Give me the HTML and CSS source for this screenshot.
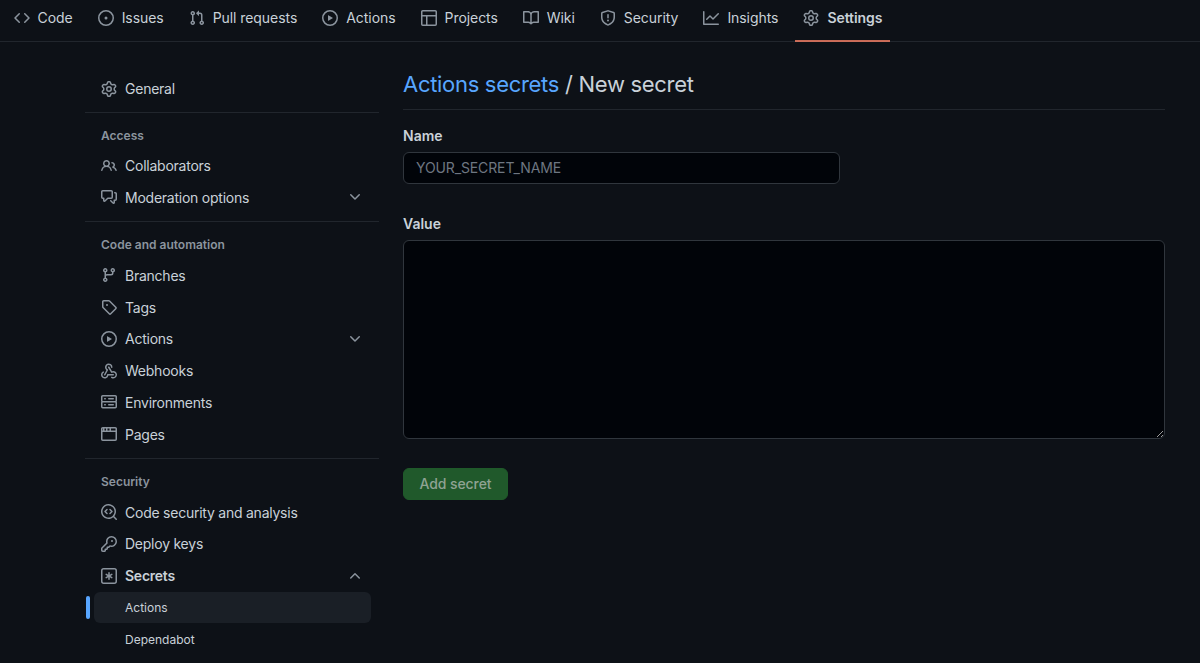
FILE: index.html
```html
<!DOCTYPE html>
<html lang="en">

<head>
    <meta charset="UTF-8">
    <meta name="viewport" content="width=device-width, initial-scale=1.0">
    <title>Actions secrets / New secret</title>
    <link rel="stylesheet" href="styles.css">
</head>

<body>
<svg class="icon-defs" aria-hidden="true">
    <symbol id="i-code" viewBox="0 0 16 16"><path d="m11.28 3.22 4.25 4.25a.75.75 0 0 1 0 1.06l-4.25 4.25a.749.749 0 0 1-1.275-.326.749.749 0 0 1 .215-.734L13.94 8l-3.72-3.72a.749.749 0 0 1 .326-1.275.749.749 0 0 1 .734.215Zm-6.56 0a.751.751 0 0 1 1.042.018.751.751 0 0 1 .018 1.042L2.06 8l3.72 3.72a.749.749 0 0 1-.326 1.275.749.749 0 0 1-.734-.215L.47 8.53a.75.75 0 0 1 0-1.06Z"/></symbol>
    <symbol id="i-issue" viewBox="0 0 16 16"><path d="M8 9.5a1.5 1.5 0 1 0 0-3 1.5 1.5 0 0 0 0 3Z"/><path d="M8 0a8 8 0 1 1 0 16A8 8 0 0 1 8 0ZM1.5 8a6.5 6.5 0 1 0 13 0 6.5 6.5 0 0 0-13 0Z"/></symbol>
    <symbol id="i-pull" viewBox="0 0 16 16"><path d="M1.5 3.25a2.25 2.25 0 1 1 3 2.122v5.256a2.251 2.251 0 1 1-1.5 0V5.372A2.25 2.25 0 0 1 1.5 3.25Zm5.677-.177L9.573.677A.25.25 0 0 1 10 .854V2.5h1A2.5 2.5 0 0 1 13.5 5v5.628a2.251 2.251 0 1 1-1.5 0V5a1 1 0 0 0-1-1h-1v1.646a.25.25 0 0 1-.427.177L7.177 3.427a.25.25 0 0 1 0-.354ZM3.75 2.5a.75.75 0 1 0 0 1.5.75.75 0 0 0 0-1.5Zm0 9.5a.75.75 0 1 0 0 1.5.75.75 0 0 0 0-1.5Zm8.25.75a.75.75 0 1 0 1.5 0 .75.75 0 0 0-1.5 0Z"/></symbol>
    <symbol id="i-play" viewBox="0 0 16 16"><path d="M8 0a8 8 0 1 1 0 16A8 8 0 0 1 8 0ZM1.5 8a6.5 6.5 0 1 0 13 0 6.5 6.5 0 0 0-13 0Zm4.879-2.773 4.264 2.559a.25.25 0 0 1 0 .428l-4.264 2.559A.25.25 0 0 1 6 10.559V5.442a.25.25 0 0 1 .379-.215Z"/></symbol>
    <symbol id="i-table" viewBox="0 0 16 16"><path d="M0 1.75C0 .784.784 0 1.75 0h12.5C15.216 0 16 .784 16 1.75v12.5A1.75 1.75 0 0 1 14.25 16H1.75A1.75 1.75 0 0 1 0 14.25ZM6.5 6.5v8h7.75a.25.25 0 0 0 .25-.25V6.5Zm8-1.5V1.75a.25.25 0 0 0-.25-.25H1.75a.25.25 0 0 0-.25.25V5Zm-13 1.5v7.75c0 .138.112.25.25.25H5v-8Z"/></symbol>
    <symbol id="i-book" viewBox="0 0 16 16"><path d="M0 1.75A.75.75 0 0 1 .75 1h4.253c1.227 0 2.317.59 3 1.501A3.743 3.743 0 0 1 11.006 1h4.245a.75.75 0 0 1 .75.75v10.5a.75.75 0 0 1-.75.75h-4.507a2.25 2.25 0 0 0-1.591.659l-.622.621a.75.75 0 0 1-1.06 0l-.622-.621A2.25 2.25 0 0 0 5.258 13H.75a.75.75 0 0 1-.75-.75Zm7.251 10.324.004-5.073-.002-2.253A2.25 2.25 0 0 0 5.003 2.5H1.5v9h3.757a3.75 3.75 0 0 1 1.994.574ZM8.755 4.75l-.004 7.322a3.752 3.752 0 0 1 1.992-.572H14.5v-9h-3.495a2.25 2.25 0 0 0-2.25 2.25Z"/></symbol>
    <symbol id="i-shield" viewBox="0 0 16 16"><path d="M7.467.133a1.748 1.748 0 0 1 1.066 0l5.25 1.68A1.75 1.75 0 0 1 15 3.48V7c0 1.566-.32 3.182-1.303 4.682-.983 1.498-2.585 2.813-5.032 3.855a1.697 1.697 0 0 1-1.33 0c-2.447-1.042-4.049-2.357-5.032-3.855C1.32 10.182 1 8.566 1 7V3.48a1.75 1.75 0 0 1 1.217-1.667Zm.61 1.429a.25.25 0 0 0-.153 0l-5.25 1.68a.25.25 0 0 0-.174.238V7c0 1.358.275 2.666 1.057 3.86.784 1.194 2.121 2.34 4.366 3.297a.196.196 0 0 0 .154 0c2.245-.956 3.582-2.104 4.366-3.298C13.225 9.666 13.5 8.36 13.5 7V3.48a.251.251 0 0 0-.174-.237l-5.25-1.68ZM8.75 4.75v3a.75.75 0 0 1-1.5 0v-3a.75.75 0 0 1 1.5 0ZM9 10.5a1 1 0 1 1-2 0 1 1 0 0 1 2 0Z"/></symbol>
    <symbol id="i-graph" viewBox="0 0 16 16"><path d="M1.5 1.75V13.5h13.75a.75.75 0 0 1 0 1.5H.75a.75.75 0 0 1-.75-.75V1.75a.75.75 0 0 1 1.5 0Zm14.28 2.53-5.25 5.25a.75.75 0 0 1-1.06 0L7 7.06 4.28 9.78a.751.751 0 0 1-1.042-.018.751.751 0 0 1-.018-1.042l3.25-3.25a.75.75 0 0 1 1.06 0L10 7.94l4.72-4.72a.751.751 0 0 1 1.042.018.751.751 0 0 1 .018 1.042Z"/></symbol>
    <symbol id="i-gear" viewBox="0 0 16 16"><path d="M8 0a8.2 8.2 0 0 1 .701.031C9.444.095 9.99.645 10.16 1.29l.288 1.107c.018.066.079.158.212.224.231.114.454.243.668.386.123.082.233.09.299.071l1.103-.303c.644-.176 1.392.021 1.82.63.27.385.506.792.704 1.218.315.675.111 1.422-.364 1.891l-.814.806c-.049.048-.098.147-.088.294.016.257.016.515 0 .772-.01.147.038.246.088.294l.814.806c.475.469.679 1.216.364 1.891a7.977 7.977 0 0 1-.704 1.217c-.428.61-1.176.807-1.82.63l-1.102-.302c-.067-.019-.177-.011-.3.071a5.909 5.909 0 0 1-.668.386c-.133.066-.194.158-.211.224l-.29 1.106c-.168.646-.715 1.196-1.458 1.26a8.006 8.006 0 0 1-1.402 0c-.743-.064-1.289-.614-1.458-1.26l-.289-1.106c-.018-.066-.079-.158-.212-.224a5.738 5.738 0 0 1-.668-.386c-.123-.082-.233-.09-.299-.071l-1.103.303c-.644.176-1.392-.021-1.82-.63a8.12 8.12 0 0 1-.704-1.218c-.315-.675-.111-1.422.363-1.891l.815-.806c.05-.048.098-.147.088-.294a6.214 6.214 0 0 1 0-.772c.01-.147-.038-.246-.088-.294l-.815-.806C.635 6.045.431 5.298.746 4.623a7.92 7.92 0 0 1 .704-1.217c.428-.61 1.176-.807 1.82-.63l1.102.302c.067.019.177.011.3-.071.214-.143.437-.272.668-.386.133-.066.194-.158.211-.224l.29-1.106C6.009.645 6.556.095 7.299.03 7.53.01 7.764 0 8 0Zm-.571 1.525c-.036.003-.108.036-.137.146l-.289 1.105c-.147.561-.549.967-.998 1.189-.173.086-.34.183-.5.29-.417.278-.97.423-1.529.27l-1.103-.303c-.109-.03-.175.016-.195.045-.22.312-.412.644-.573.99-.014.031-.021.11.059.19l.815.806c.411.406.562.957.53 1.456a4.709 4.709 0 0 0 0 .582c.032.499-.119 1.05-.53 1.456l-.815.806c-.081.08-.073.159-.059.19.162.346.353.677.573.989.02.03.085.076.195.046l1.102-.303c.56-.153 1.113-.008 1.53.27.161.107.328.204.501.29.447.222.85.629.997 1.189l.289 1.105c.029.109.101.143.137.146a6.6 6.6 0 0 0 1.142 0c.036-.003.108-.036.137-.146l.289-1.105c.147-.561.549-.967.998-1.189.173-.086.34-.183.5-.29.417-.278.97-.423 1.529-.27l1.103.303c.109.029.175-.016.195-.045.22-.313.411-.644.573-.99.014-.031.021-.11-.059-.19l-.815-.806c-.411-.406-.562-.957-.53-1.456a4.709 4.709 0 0 0 0-.582c-.032-.499.119-1.05.53-1.456l.815-.806c.081-.08.073-.159.059-.19a6.464 6.464 0 0 0-.573-.989c-.02-.03-.085-.076-.195-.046l-1.102.303c-.56.153-1.113.008-1.53-.27a4.44 4.44 0 0 0-.501-.29c-.447-.222-.85-.629-.997-1.189l-.289-1.105c-.029-.11-.101-.143-.137-.146a6.6 6.6 0 0 0-1.142 0ZM11 8a3 3 0 1 1-6 0 3 3 0 0 1 6 0ZM9.5 8a1.5 1.5 0 1 0-3.001.001A1.5 1.5 0 0 0 9.5 8Z"/></symbol>
    <symbol id="i-people" viewBox="0 0 16 16"><path d="M2 5.5a3.5 3.5 0 1 1 5.898 2.549 5.508 5.508 0 0 1 3.034 4.084.75.75 0 1 1-1.482.235 4 4 0 0 0-7.9 0 .75.75 0 0 1-1.482-.236A5.507 5.507 0 0 1 3.102 8.05 3.493 3.493 0 0 1 2 5.5ZM11 4a3.001 3.001 0 0 1 2.22 5.018 5.01 5.01 0 0 1 2.56 3.012.749.749 0 0 1-.885.954.752.752 0 0 1-.549-.514 3.507 3.507 0 0 0-2.522-2.372.75.75 0 0 1-.574-.73v-.352a.75.75 0 0 1 .416-.672A1.5 1.5 0 0 0 11 5.5.75.75 0 0 1 11 4Zm-5.5-.5a2 2 0 1 0-.001 3.999A2 2 0 0 0 5.5 3.5Z"/></symbol>
    <symbol id="i-comments" viewBox="0 0 16 16"><path d="M1.75 1h8.5c.966 0 1.75.784 1.75 1.75v5.5A1.75 1.75 0 0 1 10.25 10H7.061l-2.574 2.573A1.458 1.458 0 0 1 2 11.543V10h-.25A1.75 1.75 0 0 1 0 8.25v-5.5C0 1.784.784 1 1.75 1ZM1.5 2.75v5.5c0 .138.112.25.25.25h1a.75.75 0 0 1 .75.75v2.19l2.72-2.72a.749.749 0 0 1 .53-.22h3.5a.25.25 0 0 0 .25-.25v-5.5a.25.25 0 0 0-.25-.25h-8.5a.25.25 0 0 0-.25.25Zm13 2a.25.25 0 0 0-.25-.25h-.5a.75.75 0 0 1 0-1.5h.5c.966 0 1.75.784 1.75 1.75v5.5A1.75 1.75 0 0 1 14.25 12H14v1.543a1.458 1.458 0 0 1-2.487 1.03L9.22 12.28a.749.749 0 0 1 .326-1.275.749.749 0 0 1 .734.215l2.22 2.22v-2.19a.75.75 0 0 1 .75-.75h1a.25.25 0 0 0 .25-.25Z"/></symbol>
    <symbol id="i-branch" viewBox="0 0 16 16"><path d="M9.5 3.25a2.25 2.25 0 1 1 3 2.122V6A2.5 2.5 0 0 1 10 8.5H6a1 1 0 0 0-1 1v1.128a2.251 2.251 0 1 1-1.5 0V5.372a2.25 2.25 0 1 1 1.5 0v1.836A2.493 2.493 0 0 1 6 7h4a1 1 0 0 0 1-1v-.628A2.25 2.25 0 0 1 9.5 3.25Zm-6 0a.75.75 0 1 0 1.5 0 .75.75 0 0 0-1.5 0Zm8.25-.75a.75.75 0 1 0 0 1.5.75.75 0 0 0 0-1.5ZM4.25 12a.75.75 0 1 0 0 1.5.75.75 0 0 0 0-1.5Z"/></symbol>
    <symbol id="i-tag" viewBox="0 0 16 16"><path d="M1 7.775V2.75C1 1.784 1.784 1 2.75 1h5.025c.464 0 .91.184 1.238.513l6.25 6.25a1.75 1.75 0 0 1 0 2.474l-5.026 5.026a1.75 1.75 0 0 1-2.474 0l-6.25-6.25A1.752 1.752 0 0 1 1 7.775Zm1.5 0c0 .066.026.13.073.177l6.25 6.25a.25.25 0 0 0 .354 0l5.025-5.025a.25.25 0 0 0 0-.354l-6.25-6.25a.25.25 0 0 0-.177-.073H2.75a.25.25 0 0 0-.25.25ZM6 5a1 1 0 1 1 0 2 1 1 0 0 1 0-2Z"/></symbol>
    <symbol id="i-webhook" viewBox="0 0 16 16"><path d="M5.5 4.25a2.25 2.25 0 0 1 4.5 0 .75.75 0 0 0 1.5 0 3.75 3.75 0 1 0-6.14 2.889l-2.272 4.258a.75.75 0 0 0 1.324.706L7 7.25a.75.75 0 0 0-.309-1.015A2.25 2.25 0 0 1 5.5 4.25Z"/><path d="M7.364 3.607a.75.75 0 0 1 1.03.257l2.608 4.349a3.75 3.75 0 1 1-.628 6.785.75.75 0 0 1 .752-1.299 2.25 2.25 0 1 0-.033-3.88.75.75 0 0 1-1.03-.256L7.107 4.636a.75.75 0 0 1 .257-1.03Z"/><path d="M2.9 8.776A.75.75 0 0 1 2.625 9.8 2.25 2.25 0 1 0 6 11.75a.75.75 0 0 1 .75-.751h5.5a.75.75 0 0 1 0 1.5H7.425a3.751 3.751 0 1 1-5.55-3.998.75.75 0 0 1 1.024.274Z"/></symbol>
    <symbol id="i-server" viewBox="0 0 16 16"><path d="M1.75 1h12.5c.966 0 1.75.784 1.75 1.75v4c0 .372-.116.717-.314 1 .198.283.314.628.314 1v4a1.75 1.75 0 0 1-1.75 1.75H1.75A1.75 1.75 0 0 1 0 12.75v-4c0-.358.109-.707.314-1a1.739 1.739 0 0 1-.314-1v-4C0 1.784.784 1 1.75 1ZM1.5 2.75v4c0 .138.112.25.25.25h12.5a.25.25 0 0 0 .25-.25v-4a.25.25 0 0 0-.25-.25H1.75a.25.25 0 0 0-.25.25Zm.25 5.75a.25.25 0 0 0-.25.25v4c0 .138.112.25.25.25h12.5a.25.25 0 0 0 .25-.25v-4a.25.25 0 0 0-.25-.25ZM7 4.75A.75.75 0 0 1 7.75 4h4.5a.75.75 0 0 1 0 1.5h-4.5A.75.75 0 0 1 7 4.75ZM7.75 10h4.5a.75.75 0 0 1 0 1.5h-4.5a.75.75 0 0 1 0-1.5ZM3 4.75A.75.75 0 0 1 3.75 4h.5a.75.75 0 0 1 0 1.5h-.5A.75.75 0 0 1 3 4.75ZM3.75 10h.5a.75.75 0 0 1 0 1.5h-.5a.75.75 0 0 1 0-1.5Z"/></symbol>
    <symbol id="i-browser" viewBox="0 0 16 16"><path d="M0 2.75C0 1.784.784 1 1.75 1h12.5c.966 0 1.75.784 1.75 1.75v10.5A1.75 1.75 0 0 1 14.25 15H1.75A1.75 1.75 0 0 1 0 13.25ZM14.5 6h-13v7.25c0 .138.112.25.25.25h12.5a.25.25 0 0 0 .25-.25Zm0-3.25a.25.25 0 0 0-.25-.25H10v2h4.5ZM8.5 4.5v-2h-2v2Zm-3.5 0v-2H3.5v2ZM2 4.5v-2h-.25a.25.25 0 0 0-.25.25V4.5Z"/></symbol>
    <symbol id="i-codescan" viewBox="0 0 16 16"><path d="M8.47 4.97a.75.75 0 0 0 0 1.06L9.94 7.5 8.47 8.97a.75.75 0 1 0 1.06 1.06l2-2a.75.75 0 0 0 0-1.06l-2-2a.75.75 0 0 0-1.06 0ZM6.53 6.03a.75.75 0 0 0-1.06-1.06l-2 2a.75.75 0 0 0 0 1.06l2 2a.75.75 0 1 0 1.06-1.06L5.06 7.5l1.47-1.47Z"/><path d="M12.246 13.307a7.501 7.501 0 1 1 1.06-1.06l2.474 2.473a.749.749 0 0 1-.326 1.275.749.749 0 0 1-.734-.215ZM1.5 7.5a6.002 6.002 0 0 0 3.608 5.504 6.002 6.002 0 0 0 6.486-1.117.748.748 0 0 1 .292-.293A6 6 0 1 0 1.5 7.5Z"/></symbol>
    <symbol id="i-key" viewBox="0 0 16 16"><path d="M10.5 0a5.499 5.499 0 1 1-1.288 10.848l-.932.932a.749.749 0 0 1-.53.22H7v.75a.749.749 0 0 1-.22.53l-.5.5a.749.749 0 0 1-.53.22H5v.75a.749.749 0 0 1-.22.53l-.5.5a.749.749 0 0 1-.53.22h-2A1.75 1.75 0 0 1 0 14.25v-2c0-.199.079-.389.22-.53l4.932-4.932A5.5 5.5 0 0 1 10.5 0Zm-4 5.5c-.001.431.069.86.205 1.269a.75.75 0 0 1-.181.768L1.5 12.56v1.69c0 .138.112.25.25.25h1.69l.06-.06v-1.19a.75.75 0 0 1 .75-.75h1.19l.06-.06v-1.19a.75.75 0 0 1 .75-.75h1.19l1.023-1.025a.75.75 0 0 1 .768-.18A4 4 0 1 0 6.5 5.5ZM11 6a1 1 0 1 1 0-2 1 1 0 0 1 0 2Z"/></symbol>
    <symbol id="i-asterisk" viewBox="0 0 16 16"><path d="M0 2.75A2.75 2.75 0 0 1 2.75 0h10.5A2.75 2.75 0 0 1 16 2.75v10.5A2.75 2.75 0 0 1 13.25 16H2.75A2.75 2.75 0 0 1 0 13.25ZM2.75 1.5c-.69 0-1.25.56-1.25 1.25v10.5c0 .69.56 1.25 1.25 1.25h10.5c.69 0 1.25-.56 1.25-1.25V2.75c0-.69-.56-1.25-1.25-1.25Z"/><path d="M8 4a.75.75 0 0 1 .75.75V6.7l1.69-.975a.75.75 0 0 1 .75 1.3L9.5 8l1.69.976a.75.75 0 0 1-.75 1.298L8.75 9.3v1.951a.75.75 0 0 1-1.5 0V9.299l-1.69.976a.75.75 0 0 1-.75-1.3L6.5 8l-1.69-.975a.75.75 0 0 1 .75-1.3l1.69.976V4.75A.75.75 0 0 1 8 4Z"/></symbol>
    <symbol id="i-down" viewBox="0 0 16 16"><path d="M12.78 5.22a.749.749 0 0 1 0 1.06l-4.25 4.25a.749.749 0 0 1-1.06 0L3.22 6.28a.749.749 0 1 1 1.06-1.06L8 8.939l3.72-3.719a.749.749 0 0 1 1.06 0Z"/></symbol>
    <symbol id="i-up" viewBox="0 0 16 16"><path d="M3.22 10.53a.749.749 0 0 1 0-1.06l4.25-4.25a.749.749 0 0 1 1.06 0l4.25 4.25a.749.749 0 1 1-1.06 1.06L8 6.811 4.28 10.53a.749.749 0 0 1-1.06 0Z"/></symbol>
</svg>

<nav class="repo-nav">
    <a class="tab" href="#"><svg class="icon"><use href="#i-code"/></svg>Code</a>
    <a class="tab" href="#"><svg class="icon"><use href="#i-issue"/></svg>Issues</a>
    <a class="tab" href="#"><svg class="icon"><use href="#i-pull"/></svg>Pull requests</a>
    <a class="tab" href="#"><svg class="icon"><use href="#i-play"/></svg>Actions</a>
    <a class="tab" href="#"><svg class="icon"><use href="#i-table"/></svg>Projects</a>
    <a class="tab" href="#"><svg class="icon"><use href="#i-book"/></svg>Wiki</a>
    <a class="tab" href="#"><svg class="icon"><use href="#i-shield"/></svg>Security</a>
    <a class="tab" href="#"><svg class="icon"><use href="#i-graph"/></svg>Insights</a>
    <a class="tab tab-selected" href="#"><svg class="icon"><use href="#i-gear"/></svg>Settings</a>
</nav>

<div class="layout">
    <aside class="sidebar">
        <section class="side-group">
            <a class="side-item" href="#"><svg class="icon"><use href="#i-gear"/></svg>General</a>
        </section>
        <section class="side-group">
            <h3 class="side-heading">Access</h3>
            <a class="side-item" href="#"><svg class="icon"><use href="#i-people"/></svg>Collaborators</a>
            <a class="side-item" href="#"><svg class="icon"><use href="#i-comments"/></svg>Moderation options<svg class="icon chevron"><use href="#i-down"/></svg></a>
        </section>
        <section class="side-group">
            <h3 class="side-heading">Code and automation</h3>
            <a class="side-item" href="#"><svg class="icon"><use href="#i-branch"/></svg>Branches</a>
            <a class="side-item" href="#"><svg class="icon"><use href="#i-tag"/></svg>Tags</a>
            <a class="side-item" href="#"><svg class="icon"><use href="#i-play"/></svg>Actions<svg class="icon chevron"><use href="#i-down"/></svg></a>
            <a class="side-item" href="#"><svg class="icon"><use href="#i-webhook"/></svg>Webhooks</a>
            <a class="side-item" href="#"><svg class="icon"><use href="#i-server"/></svg>Environments</a>
            <a class="side-item" href="#"><svg class="icon"><use href="#i-browser"/></svg>Pages</a>
        </section>
        <section class="side-group">
            <h3 class="side-heading">Security</h3>
            <a class="side-item" href="#"><svg class="icon"><use href="#i-codescan"/></svg>Code security and analysis</a>
            <a class="side-item" href="#"><svg class="icon"><use href="#i-key"/></svg>Deploy keys</a>
            <a class="side-item side-open" href="#"><svg class="icon"><use href="#i-asterisk"/></svg>Secrets<svg class="icon chevron"><use href="#i-up"/></svg></a>
            <a class="side-sub side-sub-active" href="#">Actions</a>
            <a class="side-sub" href="#">Dependabot</a>
        </section>
    </aside>

    <main class="content">
        <h2 class="page-title"><a href="#">Actions secrets</a> / New secret</h2>
        <form class="secret-form">
            <label class="field-label" for="secret_name">Name</label>
            <input class="field name-field" id="secret_name" type="text" placeholder="YOUR_SECRET_NAME">
            <label class="field-label value-label" for="secret_value">Value</label>
            <textarea class="field value-field" id="secret_value"></textarea>
            <button class="add-btn" type="button">Add secret</button>
        </form>
    </main>
</div>
</body>

</html>
```

FILE: styles.css
```css
html,
body {
    height: 100%;
    overflow: hidden;
}

body {
    margin: 0;
    background-color: #0d1117;
    color: #c9d1d9;
    font-family: Inter, "Liberation Sans", sans-serif;
    font-size: 14px;
}

a {
    color: inherit;
    text-decoration: none;
}

.icon-defs {
    display: none;
}

.icon {
    width: 16px;
    height: 16px;
    flex: none;
    fill: #8b949e;
}

/* Repo tabs */
.repo-nav {
    display: flex;
    gap: 9px;
    height: 41px;
    padding-left: 5.5px;
    border-bottom: 1px solid #21262d;
}

.tab {
    position: relative;
    display: flex;
    align-items: center;
    gap: 8px;
    padding: 0 8px;
    height: 35px;
    letter-spacing: -0.06px;
}

.tab-selected {
    font-weight: 600;
}

.tab-selected::after {
    content: "";
    position: absolute;
    left: 0;
    right: 0;
    top: 40px;
    height: 2px;
    background-color: #f78166;
    opacity: 0.8;
}

/* Page layout */
.layout {
    display: flex;
    gap: 24px;
    padding: 0 35px 0 85px;
}

.sidebar {
    width: 294px;
    flex: none;
    padding-top: 31px;
}

.side-group {
    padding-bottom: 8px;
    margin-bottom: 7px;
    border-bottom: 1px solid #21262d;
}

.side-group:first-child {
    padding-bottom: 7px;
}

.side-heading {
    margin: 0;
    padding: 0 16px;
    height: 30px;
    line-height: 31px;
    font-size: 12px;
    font-weight: 600;
    color: #8b949e;
}

.side-item {
    display: flex;
    align-items: center;
    gap: 8px;
    height: 31.8px;
    padding: 0 16px;
    letter-spacing: -0.24px;
}

.side-open {
    font-weight: 600;
}

.chevron {
    margin-left: auto;
}

.side-sub {
    position: relative;
    display: flex;
    align-items: center;
    height: 31.8px;
    margin: 0 8px 0 9px;
    padding-left: 31px;
    border-radius: 6px;
    font-size: 12px;
}

.side-sub-active {
    background-color: #1a1f26;
}

.side-sub-active::before {
    content: "";
    position: absolute;
    left: -8px;
    top: 4px;
    bottom: 4px;
    width: 4px;
    border-radius: 6px;
    background-color: #58a6ff;
}

/* Form */
.content {
    flex: 1;
    min-width: 0;
}

.page-title {
    margin: 0;
    padding: 26px 0 9px;
    font-size: 22px;
    line-height: 32px;
    font-weight: 400;
    border-bottom: 1px solid #21262d;
    letter-spacing: -0.3px;
}

.page-title a {
    color: #58a6ff;
}

.secret-form {
    display: flex;
    flex-direction: column;
    align-items: flex-start;
    padding-top: 16px;
}

.field-label {
    font-weight: 600;
    line-height: 20px;
    margin-bottom: 6px;
}

.field {
    box-sizing: border-box;
    padding: 4px 12px 6px;
    background-color: #010409;
    border: 1px solid #30363d;
    border-radius: 6px;
    color: #c9d1d9;
    font-family: inherit;
    font-size: 14px;
    letter-spacing: -0.12px;
}

.field::placeholder {
    color: #6e7681;
}

.name-field {
    width: 437px;
    height: 32px;
}

.value-label {
    margin-top: 30px;
}

.value-field {
    display: block;
    width: 100%;
    height: 199px;
}

.add-btn {
    margin-top: 29px;
    width: 105px;
    height: 32px;
    padding: 0 0 2px;
    border: 1px solid #1f5a2a;
    border-radius: 6px;
    background-color: #20592b;
    color: #8fa393;
    font-family: inherit;
    font-size: 14px;
    font-weight: 500;
    letter-spacing: -0.1px;
}
```
